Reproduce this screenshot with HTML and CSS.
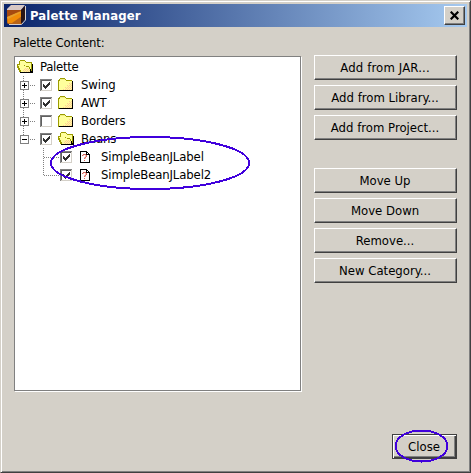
FILE: index.html
```html
<!DOCTYPE html>
<html lang="en">
<head>
<meta charset="utf-8">
<title>Palette Manager</title>
<link rel="stylesheet" href="styles.css">
</head>
<body>
<svg width="0" height="0" class="defs" shape-rendering="crispEdges">
  <defs>
    <pattern id="dither" width="2" height="2" patternUnits="userSpaceOnUse">
      <path fill="#ffcc99" d="M0 0h1v1H0zM1 1h1v1H1z"/>
    </pattern>
  </defs>
  <symbol id="folder" viewBox="0 0 16 14">
    <path fill="#9c9c00" d="M2 0h5v1h1v1h6v1h1v10H0V2h1V1h1z"/>
    <path fill="#ffff9c" d="M2 1h5v1h1v1h6v9H1V3h1z"/>
    <path fill="#efef84" d="M2 1h5v1H2z"/>
    <path fill="url(#dither)" d="M11 5h3v7H4v-1h3V9h2V7h2z"/>
    <path fill="#000" d="M14 3h1v10h-1zM1 12h14v1H1z"/>
  </symbol>
  <symbol id="open" viewBox="0 0 17 14">
    <path fill="#9c9c00" d="M3 0h5v1h1v1h6v3h1v8H3v-1H2v-2H1V8H0V4h2V1h1z"/>
    <path fill="#ffff9c" d="M3 1h5v1h1v1h5v2H9v1H8V5H3zM1 5h6v1h2v1h3v2h1v3H4v-2H3V8H2V6H1z"/>
    <path fill="#ffff9c" d="M9 5h5v4h-1V7h-1V6H9z"/>
    <path fill="url(#dither)" d="M7 8h5v2h1v2H6v-2h1z"/>
    <path fill="#000" d="M15 4h1v9h-1zM3 12h12v1H3zM13 9h1v2h1v2h-1v-1h-1z"/>
  </symbol>
  <symbol id="doc" viewBox="0 0 10 12">
    <path fill="#000" d="M0 0h7v1h1v1h1v1h1v9H0z"/>
    <path fill="#fff" d="M1 1h5v3h3v7H1z"/>
    <path fill="#fff" d="M7 2h1v1H7z"/>
    <path fill="#d86860" d="M3 3h3v1H3zM2 4h1v1H2zM6 4h1v2H6zM5 6h1v1H5zM4 7h1v1H4zM4 9h1v1H4z"/>
    <path fill="#f4c0b8" d="M3 4h1v1H3zM5 4h1v2H5zM4 6h1v1H4zM5 7h1v1H5z"/>
  </symbol>
  <symbol id="empty" viewBox="0 0 12 12">
    <path fill="#808080" d="M0 0h12v1H1v11H0z"/>
    <path fill="#606060" d="M1 1h10v1H2v9H1z"/>
    <path fill="#d4d0c8" d="M11 1h1v11H1v-1h10z"/>
  </symbol>
  <symbol id="check" viewBox="0 0 12 12">
    <use href="#empty"/>
    <path fill="#303030" d="M9 3h1v3H9v1H8v1H7v1H6v1H5V9H4V8H3V5h1v1h1v1h1V6h1V5h1V4h1z"/>
  </symbol>
  <symbol id="plus" viewBox="0 0 16 18">
    <path fill="none" stroke="#808080" stroke-dasharray="1 1" d="M3.500 0v18M10 9.500h6"/>
    <path fill="#808080" d="M0 5h9v9H0z"/><path fill="#fff" d="M1 6h7v7H1z"/>
    <path fill="#000" d="M2 9h5v1H2zM4 7h1v5H4z"/>
  </symbol>
  <symbol id="minus" viewBox="0 0 16 18">
    <path fill="none" stroke="#808080" stroke-dasharray="1 1" d="M3.500 0v5M10 9.500h6"/>
    <path fill="#808080" d="M0 5h9v9H0z"/><path fill="#fff" d="M1 6h7v7H1z"/>
    <path fill="#000" d="M2 9h5v1H2z"/>
  </symbol>
  <symbol id="branch" viewBox="0 0 16 18">
    <path fill="none" stroke="#808080" stroke-dasharray="1 1" d="M.5 0v18M1 9.500h15"/>
  </symbol>
  <symbol id="last" viewBox="0 0 16 18">
    <path fill="none" stroke="#808080" stroke-dasharray="1 1" d="M.5 0v10M1 9.500h15"/>
  </symbol>
</svg>

<main class="window">
  <header class="titlebar">
    <svg class="app" width="20" height="20" viewBox="0 0 20 20">
      <path fill="#b86418" d="M0 5h15v14H1L0 18z"/>
      <path fill="#f08c08" d="M0 12l9-4 6-2v5L5 18H1z"/>
      <path fill="#a64a10" d="M0 5h15L0 12z"/>
      <path fill="#e4a030" d="M0 12l15-6v1L1 14z"/>
      <path fill="#d8c8c4" d="M0 4l4-4h14l-4 5H0z"/>
      <path fill="#2a1414" d="M14 5l4-4v13l-4 5z"/>
      <path fill="none" stroke="#d8d0cc" d="M18.500 1v14l-4 4.500H2"/>
    </svg>
    <h1>Palette Manager</h1>
    <button class="x" aria-label="Close"><svg width="9" height="9" viewBox="0 0 9 9"><path fill="none" stroke="#000" stroke-width="2.200" d="M.7.7l7.600 7.600M8.300.7L.7 8.300"/></svg></button>
  </header>
  <div class="content">
    <section class="left">
      <div class="caption">Palette Content:</div>
      <div class="tree">
        <div class="row root"><svg width="17" height="14"><use href="#open"/></svg><span>Palette</span></div>
        <div class="row"><svg width="16" height="18"><use href="#plus"/></svg><svg class="box" width="12" height="12"><use href="#check"/></svg><svg class="folder" width="16" height="14"><use href="#folder"/></svg><span>Swing</span></div>
        <div class="row"><svg width="16" height="18"><use href="#plus"/></svg><svg class="box" width="12" height="12"><use href="#check"/></svg><svg class="folder" width="16" height="14"><use href="#folder"/></svg><span>AWT</span></div>
        <div class="row"><svg width="16" height="18"><use href="#plus"/></svg><svg class="box" width="12" height="12"><use href="#empty"/></svg><svg class="folder" width="16" height="14"><use href="#folder"/></svg><span>Borders</span></div>
        <div class="row"><svg width="16" height="18"><use href="#minus"/></svg><svg class="box" width="12" height="12"><use href="#check"/></svg><svg class="folder opened" width="17" height="14"><use href="#open"/></svg><span>Beans</span></div>
        <div class="row leaf"><svg width="16" height="18"><use href="#branch"/></svg><svg class="box" width="12" height="12"><use href="#check"/></svg><svg class="doc" width="10" height="12"><use href="#doc"/></svg><span>SimpleBeanJLabel</span></div>
        <div class="row leaf"><svg width="16" height="18"><use href="#last"/></svg><svg class="box" width="12" height="12"><use href="#check"/></svg><svg class="doc" width="10" height="12"><use href="#doc"/></svg><span>SimpleBeanJLabel2</span></div>
      </div>
    </section>
    <aside class="actions">
      <button class="wide">Add from JAR...</button>
      <button>Add from Library...</button>
      <button>Add from Project...</button>
      <button class="gap">Move Up</button>
      <button>Move Down</button>
      <button>Remove...</button>
      <button>New Category...</button>
      <button class="close">Close</button>
    </aside>
  </div>
</main>
<svg class="marks" width="471" height="473" shape-rendering="crispEdges">
  <ellipse cx="150" cy="163" rx="99" ry="26"/>
  <ellipse cx="421.500" cy="446" rx="26" ry="15.500"/>
</svg>
</body>
</html>
```
FILE: styles.css
```css
* { box-sizing: border-box; }
body {
  margin: 0;
  background: #d4d0c8;
  color: #000;
  font: 13px/18px "DejaVu Sans Condensed", "DejaVu Sans", sans-serif;
  overflow: hidden;
}
svg { display: block; flex: none; }
.defs { position: absolute; }
.window {
  width: 471px;
  height: 473px;
  padding: 2px;
  border: 1px solid;
  border-color: #d4d0c8 #404040 #404040 #d4d0c8;
  box-shadow: inset 1px 1px #fff, inset -1px -1px #808080;
}
.titlebar {
  display: flex;
  align-items: center;
  height: 23px;
  margin: 1px;
  padding: 0 2px 0 3px;
  background: linear-gradient(to right, #0a246a, #a6caf0);
}
.app { margin-top: -1px; }
h1 {
  flex: 1;
  margin: 0 0 0 3px;
  color: #fff;
  font: bold 13px/20px "DejaVu Sans Condensed", sans-serif;
  letter-spacing: .1px;
  white-space: nowrap;
}
button {
  display: flex;
  align-items: center;
  justify-content: center;
  width: 143px;
  height: 25px;
  padding: 0 1px 0 0;
  border: 1px solid;
  border-color: #fff #404040 #404040 #fff;
  box-shadow: inset -1px -1px #808080;
  background: #d4d0c8;
  color: #000;
  font: inherit;
  white-space: nowrap;
}
.wide { letter-spacing: .15px; }
.x { width: 21px; height: 19px; }
.content { display: flex; gap: 12px; padding: 0 11px; }
.left { width: 288px; }
.caption { height: 28px; padding-top: 6px; margin-left: -1px; letter-spacing: -.2px; }
.tree {
  height: 335px;
  padding-top: 1px;
  border: 1px solid #808080;
  width: 287px;
  background: #fff;
  box-shadow: 1px 1px #fff;
  letter-spacing: -.12px;
}
.row { display: flex; align-items: center; height: 18px; padding-left: 5px; white-space: nowrap; }
.root { padding-left: 2px; letter-spacing: -.3px; }
.root span { margin-left: 6px; }
.box { margin-left: 4px; }
.folder { margin: 0 7px 0 6px; }
.opened { margin-right: 6px; }
.leaf { padding-left: 28px; }
.leaf .box { margin-left: 1px; }
.doc { margin: 0 11px 0 8px; }
.actions { display: flex; flex-direction: column; gap: 5px; padding-top: 27px; height: 431px; }
.gap { margin-top: 23px; }
.close {
  width: 65px;
  margin-top: auto;
  margin-left: 78px;
  border-color: #404040;
  box-shadow: inset 1px 1px #fff, inset -1px -1px #404040, inset -2px -2px #808080;
}
.marks { position: absolute; left: 0; top: 0; pointer-events: none; }
.marks ellipse { fill: none; stroke: #4000dc; stroke-width: 2; }
```
